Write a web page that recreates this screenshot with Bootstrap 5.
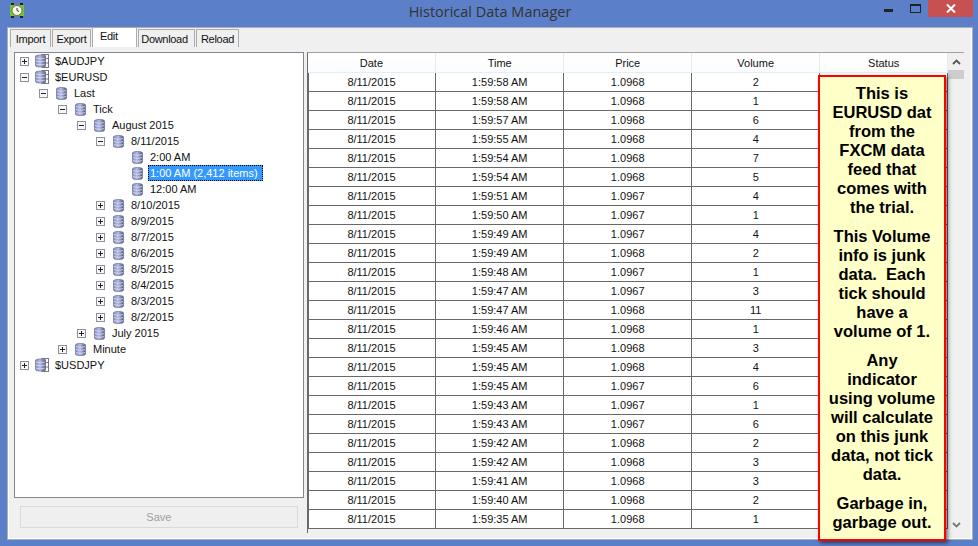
<!DOCTYPE html>
<html lang="en"><head><meta charset="utf-8"><title>Historical Data Manager</title>
<link href="https://cdn.jsdelivr.net/npm/bootstrap@5.3.0/dist/css/bootstrap.min.css" rel="stylesheet">
<style>
html,body{height:546px;overflow:hidden}
body{background:#5b7fc9;font-family:"Liberation Sans",Arial,sans-serif;font-size:11px;color:#111;position:relative}
.appwin{height:546px;padding:0 5px 6px 7px}
.titlebar{height:27px;position:relative}
.apptitle{font-family:"Open Sans",sans-serif;font-size:14.5px;line-height:24px;color:#333;text-align:center;position:absolute;left:0;right:0;top:0}
.appicon{position:absolute;left:3px;top:3px}
.winctl{position:absolute;right:0;top:0;display:flex;align-items:flex-start}
.ctlbtn{height:17px;display:flex;align-items:center;justify-content:center}
.ctlmin{width:28px;padding-top:3px}
.ctlmax{width:26px}
.ctlclose{width:45px;background:#c75050}
.tabshell{height:513px;background:#f0f0f0;border:1px solid #a9b0bc;display:flex;flex-direction:column;box-shadow:inset 0 0 0 1px #fff}
.appnav{height:19px;padding:1px 0 0 1px;border:0;flex-wrap:nowrap;background:#f0f0f0;margin:0 1px;align-items:flex-start}
.appnav .nav-link{font-size:11px;letter-spacing:-.3px;line-height:18px;height:18px;padding:0;text-align:center;color:#111;background:#f0f0f0;border:1px solid #acacac;border-bottom:0;border-radius:0;margin:0 1px 0 0;white-space:nowrap}
.appnav .nav-link.active{background:#fff;height:20px;margin-top:-2px;color:#111;border-color:#acacac;line-height:17px;text-align:left;padding-left:7px}
.tabw1{width:41px}.tabw2{width:39px}.tabw3{width:45px}.tabw4{width:57px}.tabw5{width:43px}
.appnav .nav-link.tabw3{width:45px}
.appnav .nav-link.tabw4{padding-right:4px}
.panelbody{flex:1;min-height:0;display:flex;padding:5px 6px 3px 5px;gap:3px;background:#f0f0f0;margin:0 2px 3px 1px}
.leftcol{width:290px;display:flex;flex-direction:column}
.treebox{height:446px;background:#fff;border:1px solid #828790;padding-top:0}
.tnode{height:16px;display:flex;align-items:center;line-height:16px;white-space:nowrap}
.lv0{padding-left:5px}.lv1{padding-left:24px}.lv2{padding-left:43px}.lv3{padding-left:62px}.lv4{padding-left:81px}.lv5{padding-left:100px}
.exp{width:9px;height:9px;border:1px solid #8f8f9d;margin-right:8px;flex:none;position:relative;background:#f7f7f7}
.lv0 .exp{margin-right:6px}
.exp::before{content:"";position:absolute;left:1px;right:1px;top:3px;height:1px;background:#222}
.plusbox::after{content:"";position:absolute;top:1px;bottom:1px;left:3px;width:1px;background:#222}
.noexp{width:17px;flex:none}
.tnode svg{flex:none}
.tlabel{margin-left:5px;padding:0 2px}
.rootlabel{margin-left:4px}
.tsel{background:#3399ff;color:#fff;outline:1px dotted #000;outline-offset:-1px;margin-left:5px;padding:0 5px 0 2px;height:16px}
.savewrap{padding:8px 6px 0}
.savebtn{width:100%;height:22px;padding:0;font-size:11px;line-height:20px;border-radius:0;background:#efefef;border:1px solid #d9d9d9;color:#a0a0a0;opacity:1}
.savebtn:disabled{background:#efefef;border-color:#d9d9d9;color:#a0a0a0;opacity:1}
.gridbox{width:658px;display:flex;height:481px;background:#f0f0f0;border-top:1px solid #a0a0a0;border-left:1px solid #696969;overflow:hidden}
.gridtable{width:640px;table-layout:fixed;margin:0;--bs-table-bg:transparent;color:#111;align-self:flex-start}
.gridtable th{height:19px;padding:0;font-weight:400;font-size:11px;line-height:18px;text-align:center;background:linear-gradient(#fff,#fbfcfe);border:0;border-right:1px solid #e3ecf7;border-bottom:1px solid #e3ecf7;color:#111}
.gridtable td{height:19px;padding:0;font-size:11px;line-height:18px;text-align:center;background:#fff;border:0;border-right:1px solid #696969;border-bottom:1px solid #696969;color:#111}
.gridtable th,.gridtable td{width:128px}
.gridtable td:first-child{box-shadow:inset 1px 0 0 #696969}
.vscroll{width:17px;background:#f0f0f0;display:flex;flex-direction:column;height:100%;margin-left:0}
.sarrow{height:17px;display:flex;align-items:center;justify-content:center;flex:none}
.sthumb{height:9px;background:#cdcdcd;flex:none}
.strack{flex:1}
.notebox{position:absolute;left:818px;top:75px;width:128px;height:466px;background:#ffffc8;border:2px solid #f00;box-shadow:2px 2px 4px rgba(0,0,0,.55);font-weight:700;font-size:16.5px;line-height:19px;color:#000;text-align:center;padding:7px 6px 0}
.notebox p{margin:0 0 10px}
</style></head>
<body>
<svg width="0" height="0" class="d-block position-absolute">
<defs>
<linearGradient id="cyl" x1="0" x2="1" y1="0" y2="0"><stop offset="0" stop-color="#7f86c0"/><stop offset=".45" stop-color="#b8bee6"/><stop offset="1" stop-color="#4f5688"/></linearGradient>
<symbol id="dbi" viewBox="0 0 11 13"><path d="M.5 2C.5 1 2.500.5 5.500.5s5 .5 5 1.500v9c0 1-2 1.500-5 1.500s-5-.5-5-1.500z" fill="url(#cyl)" stroke="#6a7096" stroke-width=".7"/><path d="M1 3.500c2 1 7 1 9 0M1 6.500c2 1 7 1 9 0M1 9.500c2 1 7 1 9 0" fill="none" stroke="#dfe1f3" stroke-width=".8"/></symbol>
<symbol id="rti" viewBox="0 0 14 14"><rect x="7" y=".5" width="6.500" height="13" fill="#fff" stroke="#777"/><path d="M7 4.500h6.500M7 9h6.500M10 .5v13" stroke="#777" fill="none"/><path d="M.5 2.500c0-1 2-1.500 5-1.500s5 .5 5 1.500v9c0 1-2 1.500-5 1.500s-5-.5-5-1.500z" fill="url(#cyl)" stroke="#6a7096" stroke-width=".7"/><path d="M1 4c2 1 7 1 9 0M1 7c2 1 7 1 9 0M1 10c2 1 7 1 9 0" fill="none" stroke="#dfe1f3" stroke-width=".8"/></symbol>
</defs></svg>
<div class="appwin">
<div class="titlebar">
<svg class="appicon" width="14" height="15" viewBox="0 0 14 15"><path d="M0 2h14v11H0z" fill="#74c62e"/><path d="M1 0h3v2H1zM10 0h3v2h-3zM1 13h3v2H1zM10 13h3v2h-3z" fill="#222"/><circle cx="7" cy="7.500" r="5" fill="#fbf8ee" stroke="#7a6a48"/><path d="M7 5v2.500l2 1" stroke="#333" fill="none"/></svg>
<div class="apptitle">Historical Data Manager</div>
<div class="winctl">
<div class="ctlbtn ctlmin"><svg width="9" height="3" viewBox="0 0 9 3"><rect width="9" height="3" fill="#222"/></svg></div>
<div class="ctlbtn ctlmax"><svg width="11" height="9" viewBox="0 0 11 9"><rect x=".5" y="1" width="10" height="7.500" fill="none" stroke="#222"/><rect x="0" y="0" width="11" height="2" fill="#222"/></svg></div>
<div class="ctlbtn ctlclose"><svg width="10" height="9" viewBox="0 0 10 9"><path d="M1 .5l8 8M9 .5l-8 8" stroke="#fff" stroke-width="2"/></svg></div>
</div>
</div>
<div class="tabshell">
<ul class="nav nav-tabs appnav">
<li class="nav-item"><a class="nav-link tabw1" href="#">Import</a></li>
<li class="nav-item"><a class="nav-link tabw2" href="#">Export</a></li>
<li class="nav-item"><a class="nav-link active tabw3" href="#">Edit</a></li>
<li class="nav-item"><a class="nav-link tabw4" href="#">Download</a></li>
<li class="nav-item"><a class="nav-link tabw5" href="#">Reload</a></li>
</ul>
<div class="panelbody">
<div class="leftcol">
<div class="treebox">
<div class="tnode lv0"><span class="exp plusbox"></span><svg width="14" height="14"><use href="#rti"/></svg><span class="tlabel rootlabel">$AUDJPY</span></div>
<div class="tnode lv0"><span class="exp"></span><svg width="14" height="14"><use href="#rti"/></svg><span class="tlabel rootlabel">$EURUSD</span></div>
<div class="tnode lv1"><span class="exp"></span><svg width="11" height="13"><use href="#dbi"/></svg><span class="tlabel">Last</span></div>
<div class="tnode lv2"><span class="exp"></span><svg width="11" height="13"><use href="#dbi"/></svg><span class="tlabel">Tick</span></div>
<div class="tnode lv3"><span class="exp"></span><svg width="11" height="13"><use href="#dbi"/></svg><span class="tlabel">August 2015</span></div>
<div class="tnode lv4"><span class="exp"></span><svg width="11" height="13"><use href="#dbi"/></svg><span class="tlabel">8/11/2015</span></div>
<div class="tnode lv5"><span class="noexp"></span><svg width="11" height="13"><use href="#dbi"/></svg><span class="tlabel">2:00 AM</span></div>
<div class="tnode lv5"><span class="noexp"></span><svg width="11" height="13"><use href="#dbi"/></svg><span class="tlabel tsel">1:00 AM (2,412 items)</span></div>
<div class="tnode lv5"><span class="noexp"></span><svg width="11" height="13"><use href="#dbi"/></svg><span class="tlabel">12:00 AM</span></div>
<div class="tnode lv4"><span class="exp plusbox"></span><svg width="11" height="13"><use href="#dbi"/></svg><span class="tlabel">8/10/2015</span></div>
<div class="tnode lv4"><span class="exp plusbox"></span><svg width="11" height="13"><use href="#dbi"/></svg><span class="tlabel">8/9/2015</span></div>
<div class="tnode lv4"><span class="exp plusbox"></span><svg width="11" height="13"><use href="#dbi"/></svg><span class="tlabel">8/7/2015</span></div>
<div class="tnode lv4"><span class="exp plusbox"></span><svg width="11" height="13"><use href="#dbi"/></svg><span class="tlabel">8/6/2015</span></div>
<div class="tnode lv4"><span class="exp plusbox"></span><svg width="11" height="13"><use href="#dbi"/></svg><span class="tlabel">8/5/2015</span></div>
<div class="tnode lv4"><span class="exp plusbox"></span><svg width="11" height="13"><use href="#dbi"/></svg><span class="tlabel">8/4/2015</span></div>
<div class="tnode lv4"><span class="exp plusbox"></span><svg width="11" height="13"><use href="#dbi"/></svg><span class="tlabel">8/3/2015</span></div>
<div class="tnode lv4"><span class="exp plusbox"></span><svg width="11" height="13"><use href="#dbi"/></svg><span class="tlabel">8/2/2015</span></div>
<div class="tnode lv3"><span class="exp plusbox"></span><svg width="11" height="13"><use href="#dbi"/></svg><span class="tlabel">July 2015</span></div>
<div class="tnode lv2"><span class="exp plusbox"></span><svg width="11" height="13"><use href="#dbi"/></svg><span class="tlabel">Minute</span></div>
<div class="tnode lv0"><span class="exp plusbox"></span><svg width="14" height="14"><use href="#rti"/></svg><span class="tlabel rootlabel">$USDJPY</span></div>
</div>
<div class="savewrap"><button class="btn savebtn" disabled>Save</button></div>
</div>
<div class="gridbox">
<table class="table gridtable">
<thead><tr><th>Date</th><th>Time</th><th>Price</th><th>Volume</th><th>Status</th></tr></thead>
<tbody>
<tr><td>8/11/2015</td><td>1:59:58 AM</td><td>1.0968</td><td>2</td><td></td></tr>
<tr><td>8/11/2015</td><td>1:59:58 AM</td><td>1.0968</td><td>1</td><td></td></tr>
<tr><td>8/11/2015</td><td>1:59:57 AM</td><td>1.0968</td><td>6</td><td></td></tr>
<tr><td>8/11/2015</td><td>1:59:55 AM</td><td>1.0968</td><td>4</td><td></td></tr>
<tr><td>8/11/2015</td><td>1:59:54 AM</td><td>1.0968</td><td>7</td><td></td></tr>
<tr><td>8/11/2015</td><td>1:59:54 AM</td><td>1.0968</td><td>5</td><td></td></tr>
<tr><td>8/11/2015</td><td>1:59:51 AM</td><td>1.0967</td><td>4</td><td></td></tr>
<tr><td>8/11/2015</td><td>1:59:50 AM</td><td>1.0967</td><td>1</td><td></td></tr>
<tr><td>8/11/2015</td><td>1:59:49 AM</td><td>1.0967</td><td>4</td><td></td></tr>
<tr><td>8/11/2015</td><td>1:59:49 AM</td><td>1.0968</td><td>2</td><td></td></tr>
<tr><td>8/11/2015</td><td>1:59:48 AM</td><td>1.0967</td><td>1</td><td></td></tr>
<tr><td>8/11/2015</td><td>1:59:47 AM</td><td>1.0967</td><td>3</td><td></td></tr>
<tr><td>8/11/2015</td><td>1:59:47 AM</td><td>1.0968</td><td>11</td><td></td></tr>
<tr><td>8/11/2015</td><td>1:59:46 AM</td><td>1.0968</td><td>1</td><td></td></tr>
<tr><td>8/11/2015</td><td>1:59:45 AM</td><td>1.0968</td><td>3</td><td></td></tr>
<tr><td>8/11/2015</td><td>1:59:45 AM</td><td>1.0968</td><td>4</td><td></td></tr>
<tr><td>8/11/2015</td><td>1:59:45 AM</td><td>1.0967</td><td>6</td><td></td></tr>
<tr><td>8/11/2015</td><td>1:59:43 AM</td><td>1.0967</td><td>1</td><td></td></tr>
<tr><td>8/11/2015</td><td>1:59:43 AM</td><td>1.0967</td><td>6</td><td></td></tr>
<tr><td>8/11/2015</td><td>1:59:42 AM</td><td>1.0968</td><td>2</td><td></td></tr>
<tr><td>8/11/2015</td><td>1:59:42 AM</td><td>1.0968</td><td>3</td><td></td></tr>
<tr><td>8/11/2015</td><td>1:59:41 AM</td><td>1.0968</td><td>3</td><td></td></tr>
<tr><td>8/11/2015</td><td>1:59:40 AM</td><td>1.0968</td><td>2</td><td></td></tr>
<tr><td>8/11/2015</td><td>1:59:35 AM</td><td>1.0968</td><td>1</td><td></td></tr>
</tbody></table>
<div class="vscroll">
<div class="sarrow"><svg width="9" height="6" viewBox="0 0 9 6"><path d="M1 5l3.500-3.500L8 5" fill="none" stroke="#555" stroke-width="1.800"/></svg></div>
<div class="sthumb"></div><div class="strack"></div>
<div class="sarrow"><svg width="9" height="6" viewBox="0 0 9 6"><path d="M1 1l3.500 3.500L8 1" fill="none" stroke="#777" stroke-width="1.800"/></svg></div>
</div>
</div>
</div>
</div>
</div>
<div class="notebox">
<p>This is<br>EURUSD dat<br>from the<br>FXCM data<br>feed that<br>comes with<br>the trial.</p>
<p>This Volume<br>info is junk<br>data.&nbsp; Each<br>tick should<br>have a<br>volume of 1.</p>
<p>Any<br>indicator<br>using volume<br>will calculate<br>on this junk<br>data, not tick<br>data.</p>
<p>Garbage in,<br>garbage out.</p>
</div>
</body></html>
